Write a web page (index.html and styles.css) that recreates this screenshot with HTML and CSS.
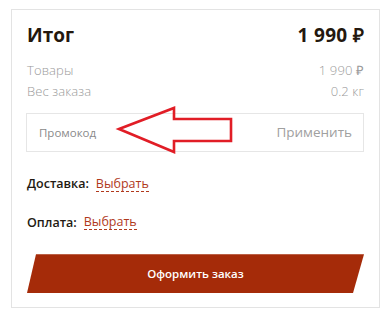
FILE: index.html
```html
<!DOCTYPE html>
<html lang="ru">
<head>
<meta charset="utf-8">
<link rel="stylesheet" href="styles.css">
</head>
<body>
<div class="card">
  <div class="head">
    <span class="title">Итог</span>
    <span class="total">1 990 ₽</span>
  </div>
  <div class="row first"><span>Товары</span><span>1 990 ₽</span></div>
  <div class="row"><span>Вес заказа</span><span>0.2 кг</span></div>
  <div class="promo">
    <span class="promo-label">Промокод</span>
    <span class="promo-apply">Применить</span>
  </div>
  <div class="choice delivery"><span class="label">Доставка:</span><a class="pick">Выбрать</a></div>
  <div class="choice payment"><span class="label">Оплата:</span><a class="pick">Выбрать</a></div>
  <div class="submit">Оформить заказ</div>
</div>
<svg class="arrow" width="390" height="320" viewBox="0 0 390 320">
  <polygon points="119,129 174,108 174,119 231,119 231,141 174,141 174,152" fill="none" stroke="#e11d26" stroke-width="2.6" stroke-linejoin="miter"/>
</svg>
</body>
</html>
```
FILE: styles.css
```css
* { box-sizing: border-box; }
html, body { margin: 0; padding: 0; background: #fff; }
body {
  font-family: "Open Sans", "Liberation Sans", sans-serif;
  width: 390px;
  height: 320px;
  position: relative;
  padding: 9px 0 0 11px;
}
.card {
  width: 369px;
  height: 299px;
  border: 1px solid #e3e3e3;
  padding: 13px 15px 14px 15px;
  display: flex;
  flex-direction: column;
}
.head {
  display: flex;
  justify-content: space-between;
  align-items: center;
  height: 24px;
  font-weight: 700;
  font-size: 19px;
  color: #24180e;
}
.total { letter-spacing: 0.3px; }
.row {
  display: flex;
  justify-content: space-between;
  height: 21px;
  line-height: 21px;
  font-size: 13px;
  color: #9a9a9a;
  font-weight: 300;
  letter-spacing: 0.1px;
}
.row.first { margin-top: 13px; }
.promo {
  margin-top: 11px;
  margin-left: -1px;
  height: 39px;
  border: 1px solid #e6e6e6;
  display: flex;
  justify-content: space-between;
  align-items: center;
  padding: 0 11px 0 12px;
}
.promo-label { font-size: 11.5px; color: #8a8a8a; }
.promo-apply { font-size: 13.5px; color: #a0a0a0; }
.choice {
  display: flex;
  align-items: center;
  height: 20px;
  font-size: 12.5px;
}
.delivery { margin-top: 22px; }
.payment { margin-top: 19px; }
.label { color: #231a12; font-weight: 600; margin-right: 7px; }
.pick {
  color: #b0391c;
  border-bottom: 1px dashed #b0391c;
  line-height: 15px;
}
.submit {
  margin-top: 22px;
  height: 39px;
  background: #a52b09;
  clip-path: polygon(9px 0, 100% 0, calc(100% - 11px) 100%, 0 100%);
  color: #fff;
  font-weight: 600;
  font-size: 11.5px;
  display: flex;
  align-items: center;
  justify-content: center;
}
.arrow {
  position: absolute;
  left: 0;
  top: 0;
  pointer-events: none;
}
```
